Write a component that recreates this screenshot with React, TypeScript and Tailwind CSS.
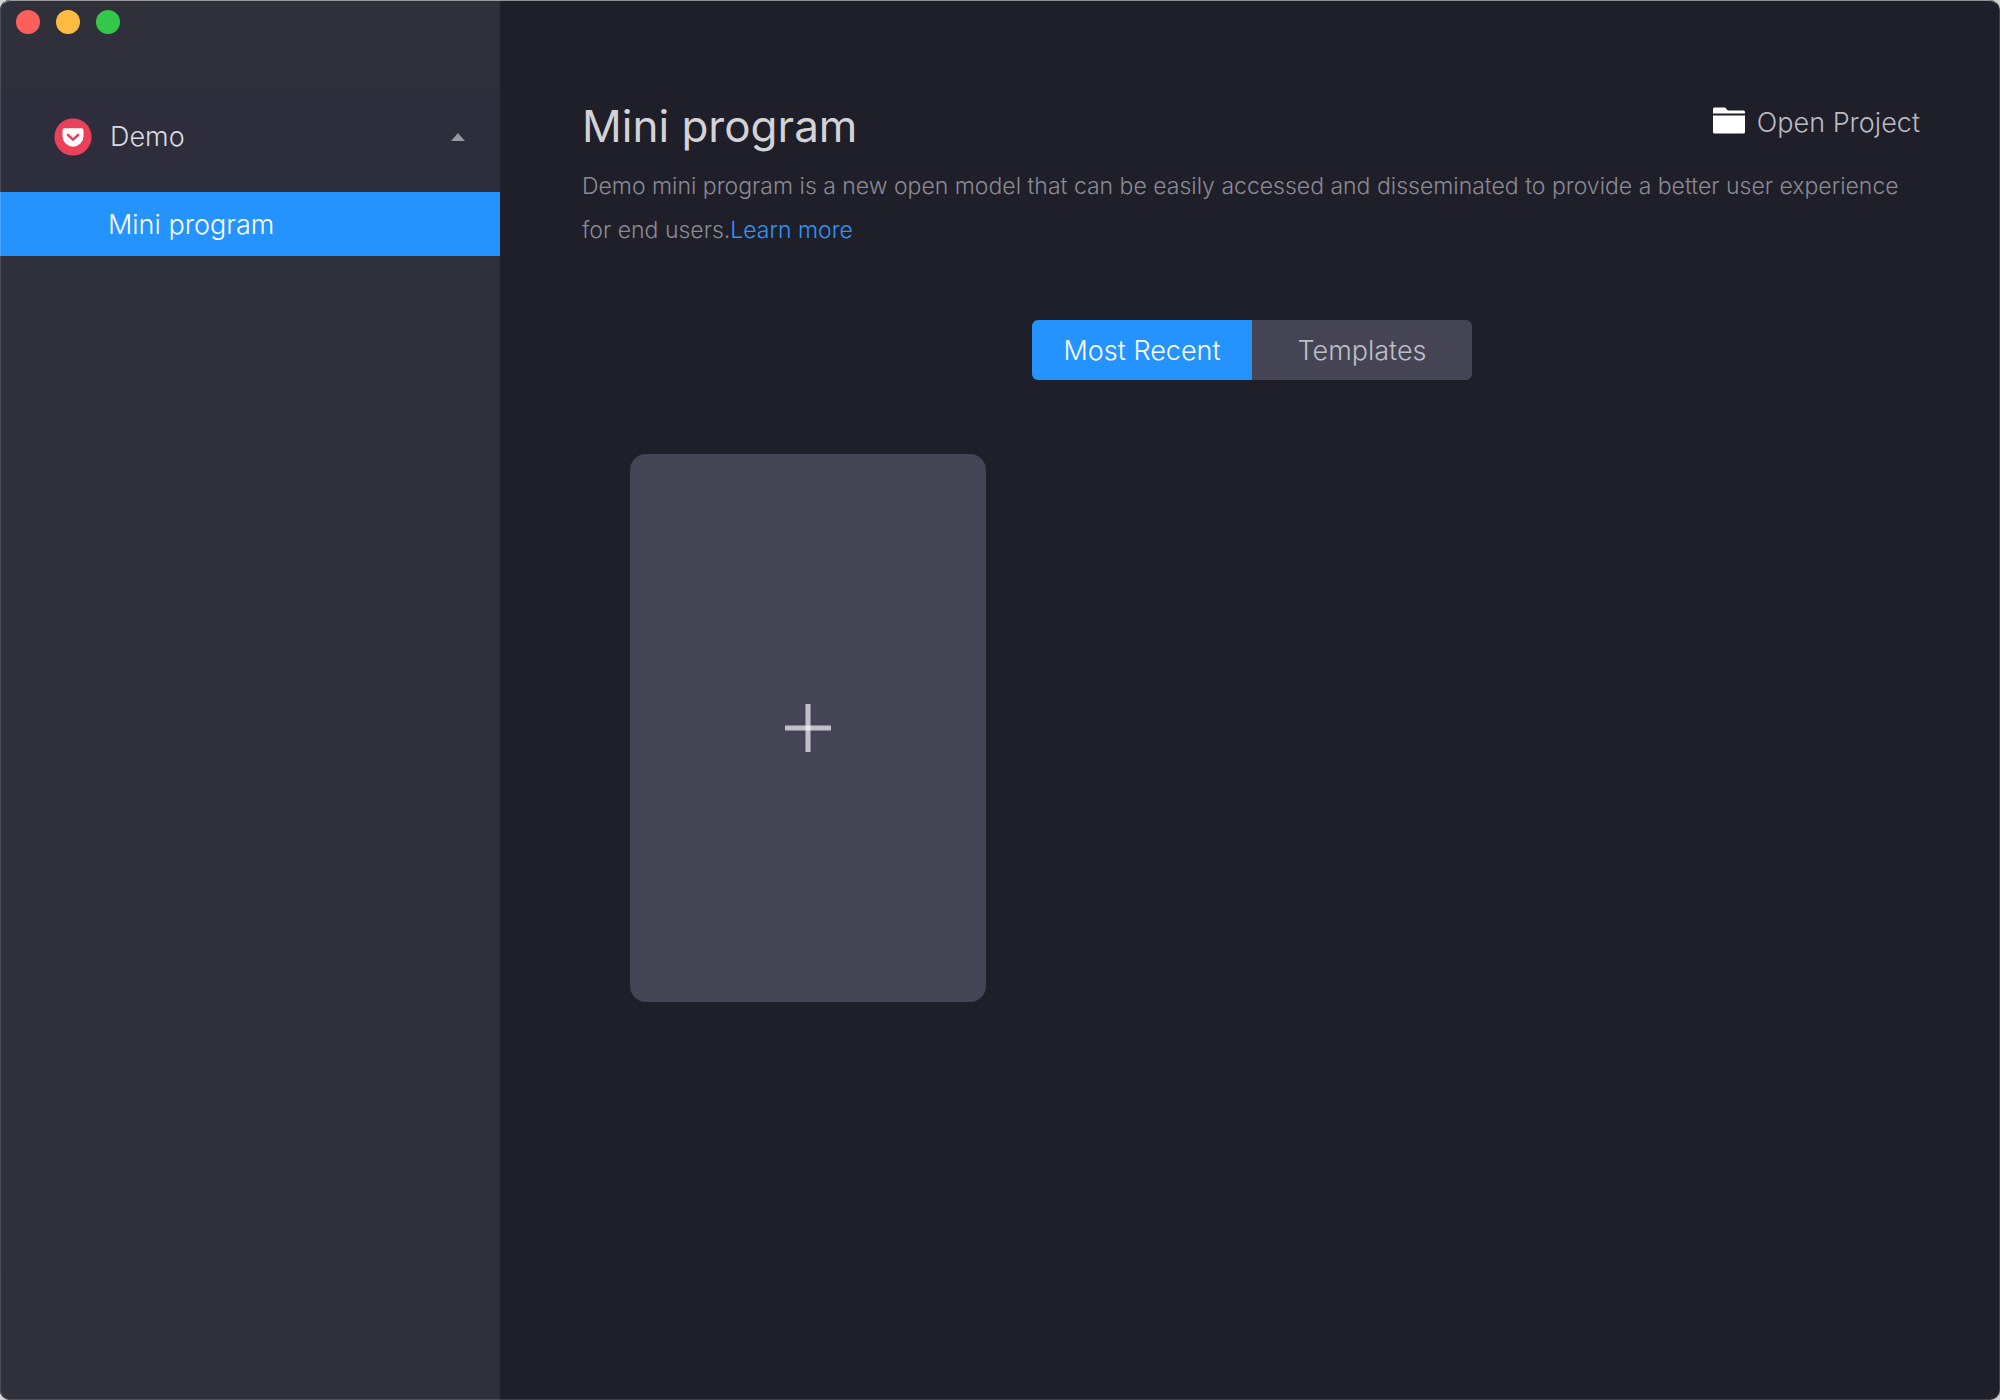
import React from "react";

function PocketIcon() {
  return (
    <svg viewBox="0 0 38 38" className="size-[38px] shrink-0" aria-hidden="true">
      <circle cx="19" cy="19" r="18.6" fill="#e9415a" />
      <path
        d="M10.500 10.200h17a2 2 0 0 1 2 2v6a10.500 10.500 0 0 1-21 0v-6a2 2 0 0 1 2-2z"
        fill="#fff"
      />
      <path
        d="M14 17l5 4.600L24 17"
        fill="none"
        stroke="#e9415a"
        strokeWidth="2.600"
        strokeLinecap="round"
        strokeLinejoin="round"
      />
    </svg>
  );
}

function FolderIcon() {
  return (
    <svg viewBox="0 0 32 27" className="mb-1.5 h-[27px] w-8 shrink-0" fill="#fff" aria-hidden="true">
      <path d="M1.500 0.500h9.700c1 0 1.600.5 2.100 1.300.6 1 1.200 1.700 2.200 1.700H30.500a1.500 1.500 0 0 1 1.500 1.500V6.500H0V2a1.500 1.500 0 0 1 1.500-1.500z" />
      <path d="M0 8.500h32v16.500a1.500 1.500 0 0 1-1.500 1.500H1.500a1.500 1.500 0 0 1-1.500-1.500z" />
    </svg>
  );
}

function Sidebar() {
  return (
    <aside className="flex w-1/4 shrink-0 flex-col bg-[#30303b]">
      <div className="flex h-[88px] gap-4 pt-2.5 pl-4">
        <button type="button" aria-label="Close" className="size-6 rounded-full bg-[#fc605c]" />
        <button type="button" aria-label="Minimize" className="size-6 rounded-full bg-[#fdbc40]" />
        <button type="button" aria-label="Zoom" className="size-6 rounded-full bg-[#34c84a]" />
      </div>
      <nav>
        <button
          type="button"
          aria-expanded="true"
          className="flex h-[104px] w-full items-center bg-[#2e2d3b] pr-[35px] pb-1.5 pl-[54px] text-[27px] font-light text-[#dcdce0]"
        >
          <PocketIcon />
          <span className="ml-[18px]">Demo</span>
          <svg viewBox="0 0 14 8" className="ml-auto h-2 w-3.5" fill="#98979f" aria-hidden="true">
            <path d="M7 0l7 8H0z" />
          </svg>
        </button>
        <a
          href="#mini-program"
          aria-current="page"
          className="flex h-16 items-center bg-[#2593fe] pt-0.5 pl-[108px] text-[27px] font-light text-white"
        >
          Mini program
        </a>
      </nav>
    </aside>
  );
}

export default function App() {
  return (
    <div className="min-h-screen bg-[#d4d4d6] font-['Inter',sans-serif]">
      <div className="relative flex min-h-screen overflow-hidden rounded-[10px] bg-[#1f1f29]">
        <Sidebar />
        <main className="min-w-0 flex-1 pt-[94px] pr-[78px] pl-[82px]">
          <header className="flex items-start justify-between">
            <h1 className="text-[44px] leading-16 text-[#d3d2d6]">Mini program</h1>
            <button
              type="button"
              className="flex h-14 items-center gap-3 pt-0.5 pr-0.5 text-[27px] font-light text-[#bbbac0]"
            >
              <FolderIcon />
              Open Project
            </button>
          </header>
          <p className="mt-1.5 text-[23px] leading-11 font-light text-[#8b8a93]">
            Demo mini program is a new open model that can be easily accessed and disseminated to
            provide a better user experience for end users.
            <a href="#learn-more" className="text-[#2f95fa]">
              Learn more
            </a>
          </p>
          <div className="mx-auto mt-[68px] flex w-[440px] overflow-hidden rounded-md text-[27px] font-light">
            <button type="button" aria-pressed="true" className="h-[60px] flex-1 bg-[#2593fe] pt-0.5 text-white">
              Most Recent
            </button>
            <button type="button" aria-pressed="false" className="h-[60px] flex-1 bg-[#454455] pt-0.5 text-[#bfbec5]">
              Templates
            </button>
          </div>
          <section className="mt-[74px] px-12">
            <button
              type="button"
              aria-label="New project"
              className="flex h-[548px] w-[356px] items-center justify-center rounded-2xl bg-[#454455]"
            >
              <svg viewBox="0 0 46 48" className="h-12 w-[46px]" aria-hidden="true">
                <path d="M0 24h46M23 0v48" stroke="#c1bfc7" strokeWidth="5" />
                <path d="M20.500 24h5" stroke="#e8e8eb" strokeWidth="5" />
              </svg>
            </button>
          </section>
        </main>
        <div className="pointer-events-none absolute inset-0 rounded-[10px] border border-white/15 border-t-white/50" />
      </div>
    </div>
  );
}
